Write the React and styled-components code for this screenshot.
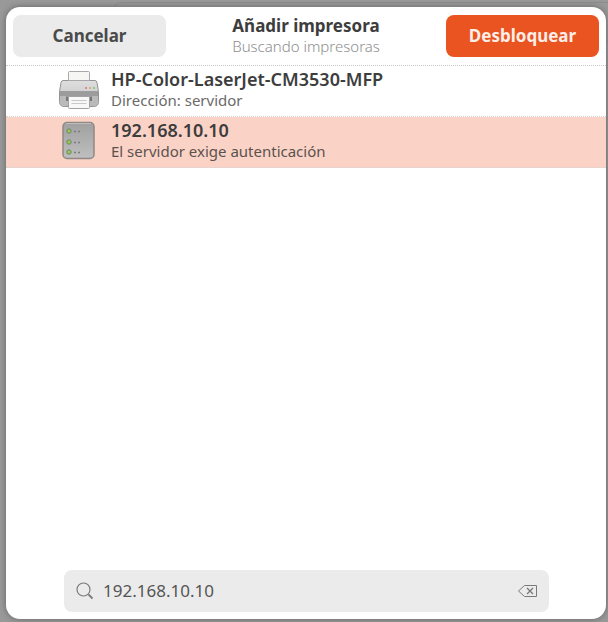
import React, { useState } from "react";
import styled, { createGlobalStyle } from "styled-components";

const GlobalStyle = createGlobalStyle`
  *, *::before, *::after { box-sizing: border-box; }
  body {
    margin: 0;
    background: #999;
    font-family: "Noto Sans", sans-serif;
    color: #3d3d3d;
  }
  button, input { font: inherit; color: inherit; }
  button { cursor: pointer; }
`;

const Backdrop = styled.div`
  position: relative;
  display: flex;
  min-height: 100vh;
  padding: 7px 2px 3px 6px;
  overflow: hidden;
  background: #999;

  &::before {
    content: "";
    position: absolute;
    top: 2px;
    left: 113px;
    right: -20px;
    height: 40px;
    border: 1px solid #8d8d8d;
    border-radius: 8px;
  }
`;

const Dialog = styled.main`
  position: relative;
  flex: 1;
  min-width: 0;
  display: flex;
  flex-direction: column;
  overflow: hidden;
  background: #fff;
  border-radius: 14px;
  box-shadow: 0 0 6px rgba(0, 0, 0, 0.35);
`;

const HeaderBar = styled.header`
  display: grid;
  grid-template-columns: 153px 1fr 153px;
  align-items: center;
  padding: 8px 7px;
`;

const HeaderButton = styled.button`
  height: 42px;
  padding: 0 8px;
  border: 0;
  border-radius: 8px;
  font-size: 17px;
  font-weight: 700;
  line-height: 24px;
  color: ${(p) => (p.$primary ? "#fdeee8" : "#4a4a4a")};
  background: ${(p) => (p.$primary ? "#e95420" : "#ebebeb")};
`;

const TitleBlock = styled.div`
  text-align: center;
  white-space: nowrap;
`;

const Title = styled.h1`
  margin: 0;
  font-size: 17px;
  font-weight: 700;
  line-height: 21px;
`;

const Subtitle = styled.p`
  margin: 0;
  font-size: 15px;
  font-weight: 300;
  line-height: 21px;
  color: #8e8e8e;
`;

const DeviceList = styled.ul`
  flex: 1;
  margin: 0;
  padding: 0;
  list-style: none;
  border-top: 1px dotted #c9c9c9;
`;

const DeviceRow = styled.li`
  border-bottom: 1px dotted #d4d4d4;
  background: ${(p) => (p.$selected ? "#fad3c6" : "#fff")};
`;

const DeviceButton = styled.button`
  display: grid;
  grid-template-columns: 42px 1fr;
  column-gap: 11px;
  align-items: center;
  width: 100%;
  height: 50px;
  padding: 0 52px;
  border: 0;
  text-align: left;
  background: transparent;
`;

const DeviceIcon = styled.svg`
  display: block;
  width: 42px;
  height: 42px;
`;

const DeviceText = styled.span`
  display: flex;
  flex-direction: column;
  min-width: 0;
  padding-bottom: 2px;
`;

const DeviceName = styled.strong`
  font-size: 18px;
  font-weight: 600;
  line-height: 21px;
`;

const DeviceDetail = styled.span`
  font-size: 15px;
  line-height: 21px;
  color: ${(p) => (p.$selected ? "#5b524f" : "#6a6a6a")};
`;

const SearchArea = styled.footer`
  padding: 0 57px 7px 58px;
`;

const SearchBox = styled.div`
  display: flex;
  align-items: center;
  gap: 9px;
  height: 42px;
  padding: 0 10px 0 12px;
  border-radius: 8px;
  background: #ebebeb;
`;

const SearchInput = styled.input`
  flex: 1;
  min-width: 0;
  padding: 0;
  border: 0;
  outline: 0;
  background: transparent;
  font-size: 17px;
  line-height: 24px;
  color: #555;
`;

const ClearButton = styled.button`
  display: flex;
  padding: 0;
  border: 0;
  background: transparent;
`;

const LineIcon = styled.svg`
  display: block;
  flex: none;
  fill: none;
  stroke: #7a7a7a;
`;

function PrinterIcon() {
  return (
    <DeviceIcon viewBox="0 0 42 42" aria-hidden="true">
      <defs>
        <linearGradient id="printerBody" x1="0" y1="0" x2="0" y2="1">
          <stop offset="0" stopColor="#dedede" />
          <stop offset="1" stopColor="#c4c4c4" />
        </linearGradient>
      </defs>
      <path d="M5 10.500h32q1.500 0 2 2l1.500 9v10q0 5-5 5h-29q-5 0-5-5v-10L3 12.500q.5-2 2-2z" fill="url(#printerBody)" stroke="#939393" />
      <path d="M2 21h38v5H2z" fill="#9c9c9c" />
      <path d="M2 26h38v5q0 5-5 5H7q-5 0-5-5z" fill="#bababa" />
      <path d="M8 26.500h26v4.500H8z" fill="#777" />
      <path d="M10.500 10.500V2.500q0-1 1-1h19q1 0 1 1v8z" fill="#f6f6f4" stroke="#a8a8a8" />
      <path d="M10.500 26.500h21v11q0 1-1 1h-19q-1 0-1-1z" fill="#f8f8f8" stroke="#a2a2a2" />
      <path d="M13.500 30.500h15M13.500 33.500h15" stroke="#c9c9c9" />
      <path d="M27 18h2" stroke="#e07474" strokeWidth="1.500" />
      <path d="M31 18h2" stroke="#e0a274" strokeWidth="1.500" />
      <path d="M35 18h2" stroke="#84bb82" strokeWidth="1.500" />
    </DeviceIcon>
  );
}

function ServerIcon() {
  return (
    <DeviceIcon viewBox="0 0 42 42" aria-hidden="true">
      <defs>
        <linearGradient id="serverBody" x1="0" y1="0" x2="0" y2="1">
          <stop offset="0" stopColor="#a0a0a0" />
          <stop offset="1" stopColor="#bfbfbf" />
        </linearGradient>
      </defs>
      <rect x="5" y="1.500" width="31" height="36" rx="4" fill="url(#serverBody)" stroke="#8f8885" strokeWidth="1.500" />
      <path d="M8 2.500h25" stroke="#bdbdbd" />
      {[10, 21, 31].map((y) => (
        <g key={y}>
          <circle cx="11" cy={y} r="2.200" fill="#8fce4e" stroke="#76816a" />
          <path d={`M16 ${y + 0.5}h2M20 ${y + 0.5}h2`} stroke="#7d7d7d" strokeWidth="1.500" />
        </g>
      ))}
    </DeviceIcon>
  );
}

const devices = [
  { name: "HP-Color-LaserJet-CM3530-MFP", detail: "Dirección: servidor", Icon: PrinterIcon },
  { name: "192.168.10.10", detail: "El servidor exige autenticación", Icon: ServerIcon },
];

export default function App() {
  const [selected, setSelected] = useState(1);
  const [query, setQuery] = useState("192.168.10.10");

  return (
    <>
      <GlobalStyle />
      <Backdrop>
        <Dialog>
          <HeaderBar>
            <HeaderButton type="button">Cancelar</HeaderButton>
            <TitleBlock>
              <Title>Añadir impresora</Title>
              <Subtitle>Buscando impresoras</Subtitle>
            </TitleBlock>
            <HeaderButton type="button" $primary>Desbloquear</HeaderButton>
          </HeaderBar>
          <DeviceList>
            {devices.map(({ name, detail, Icon }, i) => (
              <DeviceRow key={name} $selected={i === selected}>
                <DeviceButton type="button" aria-pressed={i === selected} onClick={() => setSelected(i)}>
                  <Icon />
                  <DeviceText>
                    <DeviceName>{name}</DeviceName>
                    <DeviceDetail $selected={i === selected}>{detail}</DeviceDetail>
                  </DeviceText>
                </DeviceButton>
              </DeviceRow>
            ))}
          </DeviceList>
          <SearchArea>
            <SearchBox>
              <LineIcon width="18" height="18" viewBox="0 0 18 18" aria-hidden="true">
                <circle cx="7.500" cy="7.500" r="6.500" strokeWidth="1.200" />
                <path d="M12.500 12.500 16.500 16.500" strokeWidth="1.800" />
              </LineIcon>
              <SearchInput
                type="text"
                aria-label="Buscar impresoras"
                value={query}
                onChange={(e) => setQuery(e.target.value)}
              />
              <ClearButton type="button" aria-label="Borrar" onClick={() => setQuery("")}>
                <LineIcon width="22" height="14" viewBox="0 0 22 14" aria-hidden="true">
                  <path d="M7.500 1.500h12v11h-12L1.500 7z" />
                  <path d="m10 4 6 6M16 4 10 10" strokeWidth="1.400" />
                </LineIcon>
              </ClearButton>
            </SearchBox>
          </SearchArea>
        </Dialog>
      </Backdrop>
    </>
  );
}
